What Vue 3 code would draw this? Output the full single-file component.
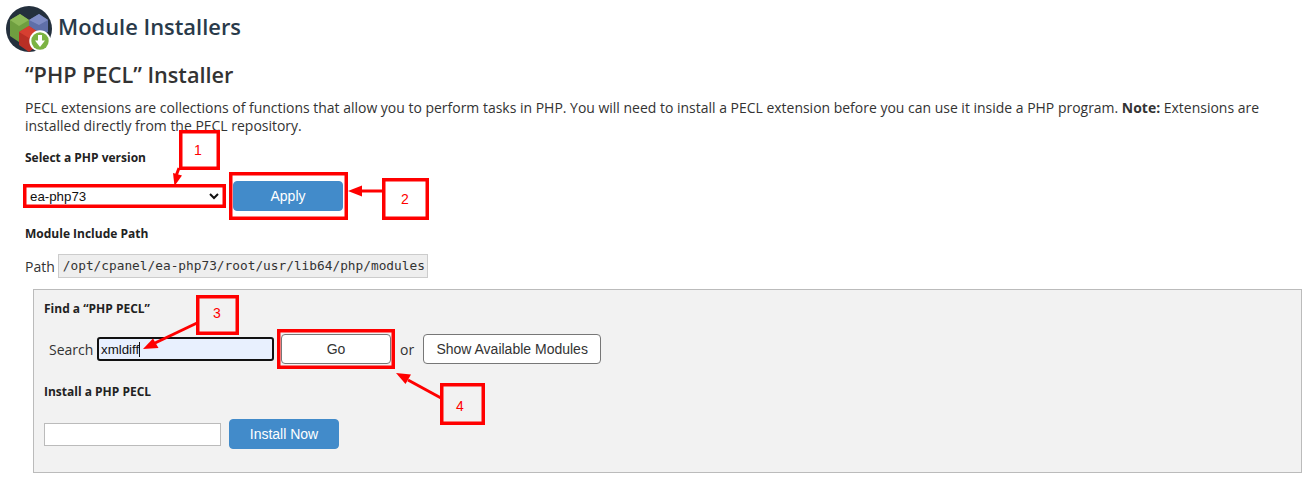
<template>
  <div class="page">
    <header class="head">
      <svg class="logo" width="48" height="48" viewBox="0 0 48 48">
        <circle cx="24" cy="24" r="23" fill="#24303d" />
        <path d="M24 15l10-6 9 6v12l-9 6-10-6z" fill="#5f6fa8" />
        <path d="M24 15l10-6 9 6-9 5z" fill="#7f8cc4" />
        <path d="M5 15l10-6 9 6v15l-10 7-9-6z" fill="#6f9f40" />
        <path d="M5 15l10-6 9 6-10 6z" fill="#8cb957" />
        <path d="M14 27l10-6 9 6v13l-9 7-10-7z" fill="#b92f25" />
        <path d="M14 27l10-6 9 6-9 6z" fill="#d63f31" />
        <circle cx="35" cy="36" r="10.700" fill="#fff" />
        <circle cx="35" cy="36" r="8.700" fill="#7cb342" />
        <path d="M33 30h4v5.500h3L35 42l-5-6.500h3z" fill="#fff" />
      </svg>
      <h1>Module Installers</h1>
    </header>

    <main class="content">
      <h2>“PHP PECL” Installer</h2>
      <p class="intro">
        PECL extensions are collections of functions that allow you to perform tasks in PHP. You will need to install a PECL extension before you can use it inside a PHP program.
        <b>Note:</b> Extensions are installed directly from the PECL repository.
      </p>

      <label class="lbl version-lbl">Select a PHP version</label>
      <div class="version-row">
        <select class="version">
          <option>ea-php73</option>
        </select>
        <button class="btn primary">Apply</button>
      </div>

      <label class="lbl path-lbl">Module Include Path</label>
      <div class="path-row">
        <span>Path</span>
        <code>/opt/cpanel/ea-php73/root/usr/lib64/php/modules</code>
      </div>

      <section class="panel">
        <label class="lbl">Find a “PHP PECL”</label>
        <div class="search-row">
          <span class="search-lbl">Search</span>
          <div class="search-box">xmldiff<i class="caret"></i></div>
          <button class="btn">Go</button>
          <span class="or">or</span>
          <button class="btn show">Show Available Modules</button>
        </div>
        <label class="lbl install-lbl">Install a PHP PECL</label>
        <div class="install-row">
          <input class="install-input" type="text" />
          <button class="btn primary">Install Now</button>
        </div>
      </section>
    </main>

    <svg class="notes" width="1308" height="477" viewBox="0 0 1308 477">
      <g fill="none" stroke="#f00" stroke-width="3.500">
        <rect x="180.750" y="131.750" width="37.500" height="36.500" />
        <rect x="24.750" y="185.750" width="199.500" height="20.500" />
        <rect x="230.750" y="173.750" width="115.500" height="44.500" />
        <rect x="383.750" y="179.750" width="43.500" height="38.500" />
        <rect x="197.750" y="296.750" width="39.500" height="36.500" />
        <rect x="278.750" y="330.750" width="114.500" height="36.500" />
        <rect x="441.750" y="384.750" width="41.500" height="38.500" />
      </g>
      <g stroke="#f00" stroke-width="3" fill="none">
        <path d="M179 168L176 176" />
        <path d="M383 191H358" />
        <path d="M197 323L155 343" />
        <path d="M441 398L408 380" />
      </g>
      <g fill="#f00">
        <path d="M174.500 186l-1.500-13 9 2.500z" />
        <path d="M348 191l14-5.500v11z" />
        <path d="M143 349l10-10.500 5.500 9.500z" />
        <path d="M396 373l15 1.500-5.500 9.500z" />
      </g>
      <g class="num">
        <text x="198" y="155">1</text>
        <text x="405" y="204">2</text>
        <text x="217" y="318">3</text>
        <text x="460" y="411">4</text>
      </g>
    </svg>
  </div>
</template>

<script setup>
</script>

<style scoped>
.page {
  position: relative;
  width: 1308px;
  height: 477px;
  overflow: hidden;
  background: #fff;
  color: #333;
  font-family: "Open Sans", sans-serif;
  font-size: 14px;
}

.head {
  display: flex;
  align-items: center;
  gap: 5px;
  padding: 5px 0 0 5px;
  height: 48px;
}

.head h1 {
  margin: 0 0 5px;
  font-size: 21.900px;
  font-weight: 600;
  line-height: 30px;
  color: #293a4a;
}

.content {
  padding: 0 0 0 25px;
  width: 1258px;
}

h2 {
  margin: 7px 0 0;
  font-size: 21.700px;
  font-weight: 600;
  line-height: 30px;
  color: #333;
}

.intro {
  margin: 9px 0 0;
  line-height: 18px;
  font-size: 13.970px;
}

.lbl {
  display: block;
  font-size: 12px;
  font-weight: 700;
  line-height: 16px;
  color: #222;
}

.version-lbl {
  margin-top: 15px;
}

.version-row {
  display: flex;
  align-items: center;
  gap: 11px;
  margin-top: 15px;
}

.version {
  width: 196px;
  height: 18px;
  margin-left: 1px;
  padding: 0;
  border: 0;
  background: #fff;
  color: #111;
  font-family: "Liberation Sans", sans-serif;
  font-size: 13.300px;
}

.btn {
  box-sizing: border-box;
  width: 110px;
  height: 30px;
  border: 1px solid #777;
  border-radius: 4px;
  background: #fff;
  color: #333;
  font-family: "Liberation Sans", sans-serif;
  font-size: 14px;
  padding: 0;
}

.btn.primary {
  border-color: #428bca;
  background: #428bca;
  color: #fff;
}

.path-lbl {
  margin-top: 15px;
}

.path-row {
  display: flex;
  align-items: center;
  gap: 3px;
  margin-top: 12px;
}

code {
  box-sizing: border-box;
  height: 24px;
  width: 370px;
  padding: 0 4px;
  border: 1px solid #ccc;
  background: #eee;
  color: #333;
  font-family: "DejaVu Sans Mono", monospace;
  font-size: 12.800px;
  line-height: 22px;
  white-space: nowrap;
}

.panel {
  box-sizing: border-box;
  width: 1269px;
  height: 184px;
  margin: 11px 0 0 8px;
  padding: 11px 10px;
  border: 1px solid #bbb;
  background: #f2f2f2;
}

.search-row {
  display: flex;
  align-items: center;
  margin: 17px 0 0 5px;
}

.search-lbl {
  width: 48px;
}

.search-box {
  box-sizing: border-box;
  display: flex;
  align-items: center;
  width: 177px;
  height: 24px;
  margin-right: 7px;
  padding-left: 2px;
  border: 2px solid #111;
  border-radius: 3px;
  background: #e8f0fe;
  color: #111;
  font-family: "Liberation Sans", sans-serif;
  font-size: 13.300px;
}

.caret {
  width: 1px;
  height: 15px;
  background: #111;
}

.or {
  margin: 0 9px;
}

.btn.show {
  width: 178px;
}

.install-lbl {
  margin-top: 20px;
}

.install-row {
  display: flex;
  align-items: center;
  gap: 8px;
  margin-top: 19px;
}

.install-input {
  box-sizing: border-box;
  width: 177px;
  height: 23px;
  border: 1px solid #bbb;
  background: #fff;
}

.notes {
  position: absolute;
  left: 0;
  top: 0;
  pointer-events: none;
}

.num text {
  fill: #f00;
  font-family: "Liberation Sans", sans-serif;
  font-size: 14px;
  text-anchor: middle;
}
</style>
